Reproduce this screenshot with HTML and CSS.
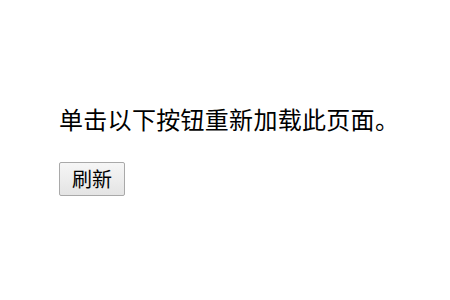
FILE: index.html
```html
<!DOCTYPE html>
<html lang="zh-CN">
<head>
  <meta charset="UTF-8">
  <title>刷新</title>
  <link rel="stylesheet" href="styles.css">
</head>
<body>
  <main class="page">
    <p class="message">单击以下按钮重新加载此页面。</p>
    <button class="reload" type="button">刷新</button>
  </main>
</body>
</html>
```

FILE: styles.css
```css
* {
  box-sizing: border-box;
}

body {
  margin: 0;
  background: #fff;
  font-family: "Noto Sans CJK SC", "Noto Sans", sans-serif;
  color: #000;
}

.page {
  padding: 102px 0 0 59px;
}

.message {
  margin: 0 0 26px;
  font-size: 24px;
  line-height: 34px;
  letter-spacing: 0.3px;
}

.reload {
  width: 66px;
  height: 34px;
  padding: 0;
  font-family: "Noto Sans CJK SC", sans-serif;
  font-size: 20px;
  line-height: 32px;
  color: #000;
  border: 1px solid #a9a9a9;
  border-radius: 2px;
  background: linear-gradient(#f6f6f6, #e4e4e4);
}
```
